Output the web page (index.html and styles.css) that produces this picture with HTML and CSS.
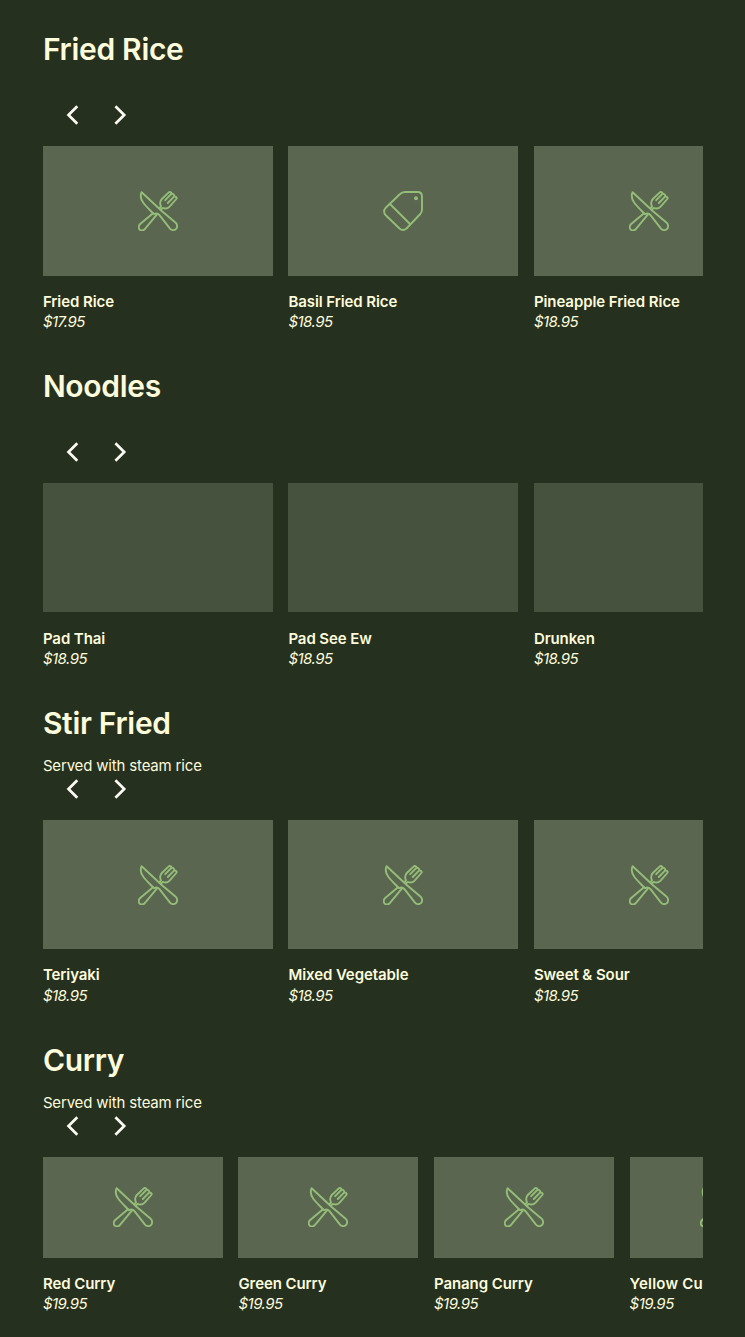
FILE: index.html
```html
<!DOCTYPE html>
<html lang="en">
<head>
    <meta charset="UTF-8">
    <meta name="viewport" content="width=device-width, initial-scale=1.0">
    <title>Menu</title>
    <link rel="stylesheet" href="styles.css">
</head>
<body>
    <!-- Shared icons -->
    <svg class="icon-defs" aria-hidden="true">
        <symbol id="utensils" viewBox="0 0 40 40">
            <path d="M3.6 1.2C2.2 4.5 2.5 8.3 5.5 12C8.5 16 12.5 19.5 16 23.2C17.8 22.2 20 22.4 21.5 24.2L31.6 37.2C33.2 39.5 36.3 39.7 38 38C39.7 36.2 39.4 33.2 37.4 31.6L24 20.3Z" />
            <path d="M21.3 17.4L23 15.4C21.6 12.5 22 10 23.8 8L30.8 1.4C32 .3 34 1.6 33.3 3C34.8 2.2 36.8 4 36 5.6C37.7 4.9 39.4 6.7 38.3 8L31.6 15.6C29.6 17.6 27 17.9 24.7 16.9L23 18.7M33.3 3L27.2 9.2M36 5.6L29.8 12" />
            <path d="M15 22.3L2.2 33C.4 34.7.2 37.2 1.7 38.6C3.2 40 5.6 39.6 7 37.9L19 23.4" />
        </symbol>
        <symbol id="tag" viewBox="0 0 40 40">
            <path d="M22 1H34.5Q39 1 39 5.5V18.5Q39 21 37.3 23L23.5 37.5Q20 40.5 16.5 37.5L2.5 24Q-.3 20.5 2.5 17L16.5 3.5Q19 1 22 1ZM7 13L27 33" />
            <circle class="tag-hole" cx="33" cy="7.2" r="2" />
        </symbol>
        <symbol id="prev" viewBox="0 0 24 24">
            <path d="M17.3 3.2L8.5 12L17.3 20.8" />
        </symbol>
        <symbol id="next" viewBox="0 0 24 24">
            <path d="M7.4 3.2L16.2 12L7.4 20.8" />
        </symbol>
    </svg>

    <main class="menu">
        <section class="category">
            <h2>Fried Rice</h2>
            <p class="description"></p>
            <div class="arrows">
                <button aria-label="Previous"><svg><use href="#prev" /></svg></button>
                <button aria-label="Next"><svg><use href="#next" /></svg></button>
            </div>
            <div class="items">
                <article class="item">
                    <div class="thumb"><svg><use href="#utensils" /></svg></div>
                    <h3>Fried Rice</h3>
                    <p class="price">$17.95</p>
                </article>
                <article class="item">
                    <div class="thumb"><svg><use href="#tag" /></svg></div>
                    <h3>Basil Fried Rice</h3>
                    <p class="price">$18.95</p>
                </article>
                <article class="item">
                    <div class="thumb"><svg><use href="#utensils" /></svg></div>
                    <h3>Pineapple Fried Rice</h3>
                    <p class="price">$18.95</p>
                </article>
            </div>
        </section>

        <section class="category">
            <h2>Noodles</h2>
            <p class="description"></p>
            <div class="arrows">
                <button aria-label="Previous"><svg><use href="#prev" /></svg></button>
                <button aria-label="Next"><svg><use href="#next" /></svg></button>
            </div>
            <div class="items">
                <article class="item">
                    <div class="thumb loading"></div>
                    <h3>Pad Thai</h3>
                    <p class="price">$18.95</p>
                </article>
                <article class="item">
                    <div class="thumb loading"></div>
                    <h3>Pad See Ew</h3>
                    <p class="price">$18.95</p>
                </article>
                <article class="item">
                    <div class="thumb loading"></div>
                    <h3>Drunken</h3>
                    <p class="price">$18.95</p>
                </article>
            </div>
        </section>

        <section class="category">
            <h2>Stir Fried</h2>
            <p class="description">Served with steam rice</p>
            <div class="arrows">
                <button aria-label="Previous"><svg><use href="#prev" /></svg></button>
                <button aria-label="Next"><svg><use href="#next" /></svg></button>
            </div>
            <div class="items">
                <article class="item">
                    <div class="thumb"><svg><use href="#utensils" /></svg></div>
                    <h3>Teriyaki</h3>
                    <p class="price">$18.95</p>
                </article>
                <article class="item">
                    <div class="thumb"><svg><use href="#utensils" /></svg></div>
                    <h3>Mixed Vegetable</h3>
                    <p class="price">$18.95</p>
                </article>
                <article class="item">
                    <div class="thumb"><svg><use href="#utensils" /></svg></div>
                    <h3>Sweet &amp; Sour</h3>
                    <p class="price">$18.95</p>
                </article>
            </div>
        </section>

        <section class="category compact">
            <h2>Curry</h2>
            <p class="description">Served with steam rice</p>
            <div class="arrows">
                <button aria-label="Previous"><svg><use href="#prev" /></svg></button>
                <button aria-label="Next"><svg><use href="#next" /></svg></button>
            </div>
            <div class="items">
                <article class="item">
                    <div class="thumb"><svg><use href="#utensils" /></svg></div>
                    <h3>Red Curry</h3>
                    <p class="price">$19.95</p>
                </article>
                <article class="item">
                    <div class="thumb"><svg><use href="#utensils" /></svg></div>
                    <h3>Green Curry</h3>
                    <p class="price">$19.95</p>
                </article>
                <article class="item">
                    <div class="thumb"><svg><use href="#utensils" /></svg></div>
                    <h3>Panang Curry</h3>
                    <p class="price">$19.95</p>
                </article>
                <article class="item">
                    <div class="thumb"><svg><use href="#utensils" /></svg></div>
                    <h3>Yellow Curry</h3>
                    <p class="price">$19.95</p>
                </article>
            </div>
        </section>
    </main>
</body>
</html>
```
FILE: styles.css
```css
body {
    margin: 0;
    background-color: #26301e;
    color: #fcfbdc;
    font-family: Inter, "Liberation Sans", sans-serif;
    overflow: hidden;
}

.icon-defs {
    display: none;
}

.menu {
    padding: 28.2px 42px 0 42.9px;
}

/* One menu category */
.category {
    padding-bottom: 32.35px;
}

.category h2 {
    margin: 0 0 11px;
    font-size: 30px;
    font-weight: 600;
    line-height: 42px;
    letter-spacing: -0.3px;
}

/* Keeps its line even when the category has no description */
.description {
    margin: 0;
    height: 21px;
    font-size: 15px;
    line-height: 21px;
    letter-spacing: -0.17px;
}

/* Carousel arrows */
.arrows {
    display: flex;
    gap: 24px;
    height: 26px;
    padding-left: 17px;
    margin-bottom: 18px;
    align-items: center;
}

.arrows button {
    display: flex;
    padding: 0;
    border: 0;
    background: none;
    color: #fafaf2;
}

.arrows svg {
    width: 24px;
    height: 24px;
    fill: none;
    stroke: currentColor;
    stroke-width: 2.7;
}

/* Item row, clipped at the right edge */
.items {
    display: flex;
    gap: 15.5px;
    overflow: hidden;
}

.item {
    flex: 0 0 230px;
}

.compact .item {
    flex-basis: 180.05px;
}

.thumb {
    display: flex;
    align-items: center;
    justify-content: center;
    height: 129.35px;
    margin-bottom: 16.2px;
    background-color: #5a6650;
}

.compact .thumb {
    height: 101px;
}

.thumb.loading {
    background-color: #46523e;
}

.thumb svg {
    width: 40px;
    height: 40px;
    fill: none;
    stroke: #94bd78;
    stroke-width: 1.9;
    stroke-linejoin: round;
    stroke-linecap: round;
}

.tag-hole {
    fill: #94bd78;
    stroke: none;
}

.item h3 {
    margin: 0;
    font-size: 15px;
    font-weight: 600;
    line-height: 20.2px;
    letter-spacing: -0.08px;
    white-space: nowrap;
}

/* The last name runs past the row edge */
.compact .item:last-child h3 {
    letter-spacing: 0.2px;
}

.price {
    margin: 0;
    font-size: 15px;
    font-style: italic;
    line-height: 20.8px;
    letter-spacing: -0.5px;
}
```
